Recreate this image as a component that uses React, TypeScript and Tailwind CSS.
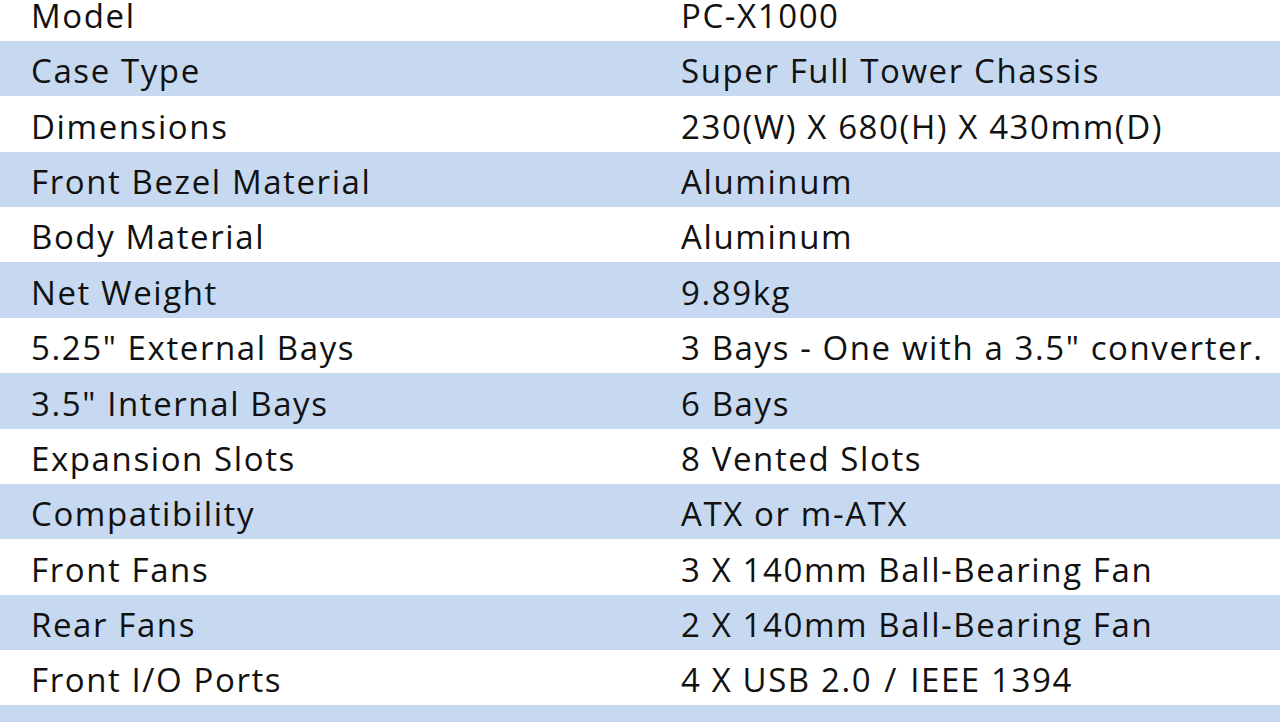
const specs: [string, React.ReactNode][] = [
  ["Model", "PC-X1000"],
  ["Case Type", "Super Full Tower Chassis"],
  ["Dimensions", "230(W) X 680(H) X 430mm(D)"],
  ["Front Bezel Material", "Aluminum"],
  ["Body Material", "Aluminum"],
  ["Net Weight", "9.89kg"],
  ['5.25" External Bays', '3 Bays - One with a 3.5" converter.'],
  ['3.5" Internal Bays', "6 Bays"],
  ["Expansion Slots", "8 Vented Slots"],
  ["Compatibility", "ATX or m-ATX"],
  ["Front Fans", "3 X 140mm Ball-Bearing Fan"],
  ["Rear Fans", "2 X 140mm Ball-Bearing Fan"],
  [
    "Front I/O Ports",
    <>
      4 X USB 2.0 <span className="px-[2px]">/</span> IEEE 1394
    </>,
  ],
  ["", ""],
];

export default function App() {
  return (
    <div className="h-[722px] w-[1280px] overflow-hidden bg-white">
      <div className="flex flex-col font-['Open_Sans',sans-serif] text-[33px] leading-[30px] tracking-[1.6px] text-[#111]">
        {specs.map(([label, value], i) => (
          <div
            key={i}
            className={`grid shrink-0 grid-cols-2 items-end pb-[10px] ${
              i === 0 ? "h-[41px]" : "h-[55.36px]"
            } ${i % 2 === 1 ? "bg-[#c6d9f1]" : "bg-white"}`}
          >
            <span className="whitespace-pre pl-[31px]">{label}</span>
            <span className="whitespace-pre pl-[41px]">{value}</span>
          </div>
        ))}
      </div>
    </div>
  );
}
